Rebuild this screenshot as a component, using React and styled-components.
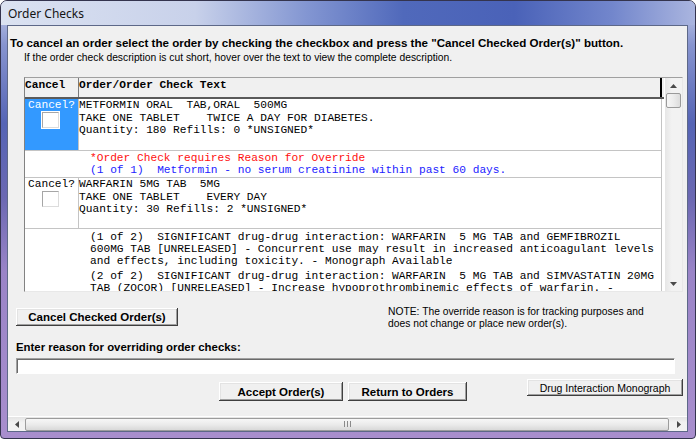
import React from 'react';
import styled, { createGlobalStyle } from 'styled-components';

const UI_FONT = '"Liberation Sans", Arial, sans-serif';
const MONO_FONT = '"Liberation Mono", "Courier New", monospace';

const GlobalStyle = createGlobalStyle`
  html, body { margin: 0; padding: 0; }
  body { width: 696px; height: 439px; overflow: hidden; background: #fff; }
`;

const Window = styled.div`
  width: 696px;
  height: 439px;
  box-sizing: border-box;
  display: flex;
  flex-direction: column;
  border: 1px solid #34344e;
  border-radius: 7px 7px 4px 4px;
  padding: 0 7px 6px 6px;
  overflow: hidden;
  background: linear-gradient(180deg, #c6cfea 0%, #8794cf 10%, #5564b5 28%, #6b68b2 45%, #9a84c7 62%, #a88ecd 100%);
`;

const TitleBar = styled.div`
  height: 24px;
  margin: 0 -7px 0 -6px;
  padding-left: 7px;
  display: flex;
  align-items: center;
  font: 12px "Noto Sans", ${UI_FONT};
  color: #141414;
  background: linear-gradient(90deg, #dbe2f1 0%, #c8d1ea 28%, #8396d2 44%, #5069bb 58%, #4a62b8 74%, #7286cc 88%, #aab5df 100%);
`;

const Client = styled.div`
  flex: 1;
  display: flex;
  flex-direction: column;
  background: #f0f0f0;
  border: 1px solid #5d6888;
  font-family: ${UI_FONT};
  color: #000;
`;

const Intro = styled.div`
  height: 51px;
  box-sizing: border-box;
  padding: 10px 0 0 2px;
`;

const Instruction = styled.div`
  font-size: 11.6px;
  font-weight: bold;
  line-height: 14px;
  white-space: nowrap;
`;

const SubLine = styled.div`
  margin: 1px 0 0 14px;
  font-size: 10.3px;
  line-height: 13px;
  white-space: nowrap;
`;

const Grid = styled.div`
  margin-left: 16px;
  width: 659px;
  height: 215px;
  box-sizing: border-box;
  display: flex;
  border-top: 1px solid #a0a0a0;
  border-left: 1px solid #828282;
  border-right: 1px solid #e8e8e8;
  border-bottom: 1px solid #e8e8e8;
  background: #fff;
`;

const GridBody = styled.div`
  flex: 1;
  display: flex;
  flex-direction: column;
  overflow: hidden;
  font-family: ${MONO_FONT};
  font-size: 11.2px;
`;

const HeaderRow = styled.div`
  height: 21px;
  flex: none;
  box-sizing: border-box;
  display: flex;
  background: #f0f0f0;
  border-bottom: 2px solid #5a5a5a;
`;

const HeaderCell = styled.div`
  box-sizing: border-box;
  width: ${p => p.w}px;
  padding-top: 1px;
  font-weight: bold;
  line-height: 13px;
  white-space: pre;
  border-right: ${p => (p.last ? '2px solid #000' : '1px solid #7a7a7a')};
`;

const Rows = styled.div`
  flex: 1;
  overflow: hidden;
`;

const Row = styled.div`
  width: 637px;
  height: ${p => p.h}px;
  box-sizing: border-box;
  display: flex;
  border-right: 1px solid #c4c4c4;
  border-bottom: 1px solid #c4c4c4;
  overflow: hidden;
`;

const CancelCell = styled.div`
  width: 54px;
  flex: none;
  box-sizing: border-box;
  border-right: 1px solid #c4c4c4;
  background: ${p => (p.selected ? '#3399ff' : '#fff')};
  color: ${p => (p.selected ? '#fff' : '#000')};
  display: flex;
  flex-direction: column;
`;

const CancelLabel = styled.div`
  padding-left: 3px;
  line-height: 12.5px;
  white-space: pre;
`;

const CheckBox = styled.div`
  width: 17px;
  height: 16px;
  margin-left: 17px;
  box-sizing: border-box;
  background: #fff;
  border: 1px solid;
  border-color: #a6a6a6 #dcdcdc #dcdcdc #a6a6a6;
  box-shadow: ${p => (p.selected ? '0 0 0 1px #ffffff' : 'none')};
`;

const TextCell = styled.div`
  flex: 1;
  padding: ${p => p.pad || '0'};
  line-height: ${p => p.lh || 12.5}px;
  white-space: pre;
  color: #000;
`;

const Line = styled.div`
  color: ${p => p.color || '#000'};
`;

const Para = styled.div`
  margin-bottom: 3px;
`;

const VScroll = styled.div`
  width: 18px;
  flex: none;
  display: flex;
  flex-direction: column;
  background: linear-gradient(90deg, #e6e6e6 0%, #f2f2f2 40%, #f2f2f2 100%);
  border-left: 1px solid #fff;
  box-sizing: border-box;
`;

const ArrowBox = styled.div`
  width: ${p => p.w || 17}px;
  height: ${p => p.h || 15}px;
  flex: none;
  display: flex;
  align-items: center;
  justify-content: center;
`;

const VThumb = styled.div`
  margin: 0 1px 0 1px;
  height: 15px;
  box-sizing: border-box;
  border: 1px solid #9a9a9a;
  border-radius: 2px;
  background: linear-gradient(90deg, #f6f6f6 0%, #ececec 50%, #dcdcdc 100%);
`;

const Track = styled.div`
  flex: 1;
`;

const ActionRow = styled.div`
  margin-top: 14px;
  height: 24px;
  padding-left: 8px;
  display: flex;
  align-items: flex-start;
`;

const WinButton = styled.button`
  box-sizing: border-box;
  width: ${p => p.w}px;
  height: ${p => p.h}px;
  margin: ${p => p.m || '0'};
  padding: 0;
  flex: none;
  border: none;
  background: #f0f0f0;
  font-family: ${UI_FONT};
  font-size: ${p => (p.plain ? '10.5px' : '11.5px')};
  font-weight: ${p => (p.plain ? 'normal' : 'bold')};
  color: #000;
  box-shadow: inset -1px -1px #3f3f3f, inset 1px 1px #ffffff, inset -2px -2px #a0a0a0, inset 2px 2px #e3e3e3;
`;

const Note = styled.div`
  margin-left: 210px;
  font-size: 10.3px;
  line-height: 12px;
`;

const FieldLabel = styled.div`
  margin: 10px 0 0 8px;
  font-size: 11.4px;
  font-weight: bold;
  line-height: 14px;
`;

const ReasonInput = styled.div`
  margin: 4px 0 0 8px;
  width: 659px;
  height: 16px;
  box-sizing: border-box;
  background: #fff;
  border: 1px solid;
  border-color: #a0a0a0 #ffffff #ffffff #a0a0a0;
  box-shadow: inset 1px 1px #6a6a6a;
`;

const ButtonRow = styled.div`
  margin-top: 5px;
  display: flex;
  align-items: flex-start;
`;

const HScroll = styled.div`
  margin-top: auto;
  height: 14px;
  display: flex;
  align-items: center;
  background: linear-gradient(180deg, #e4e4e4 0%, #f2f2f2 40%, #f2f2f2 100%);
  border-top: 1px solid #fff;
`;

const HThumb = styled.div`
  flex: 1;
  height: 13px;
  margin-right: 1px;
  box-sizing: border-box;
  border: 1px solid #9c9c9c;
  border-radius: 2px;
  background: linear-gradient(180deg, #f7f7f7 0%, #ebebeb 50%, #d9d9d9 100%);
  display: flex;
  align-items: center;
  justify-content: center;
`;

const Arrow = ({ dir }) => {
  const pts = {
    up: '0,4 3.5,0 7,4',
    down: '0,0 7,0 3.5,4',
    left: '4,0 4,7 0,3.5',
    right: '0,0 0,7 4,3.5',
  }[dir];
  const vertical = dir === 'up' || dir === 'down';
  return (
    <svg width={vertical ? 7 : 4} height={vertical ? 4 : 7} viewBox={vertical ? '0 0 7 4' : '0 0 4 7'}>
      <polygon points={pts} fill="#4a4a4a" />
    </svg>
  );
};

const Grip = () => (
  <svg width="7" height="6" viewBox="0 0 7 6">
    <path d="M0.5 0v6M3.5 0v6M6.5 0v6" stroke="#8a8a8a" strokeWidth="1" />
  </svg>
);

const orders = [
  {
    id: 'metformin',
    selected: true,
    h: 52,
    lines: [
      'METFORMIN ORAL  TAB,ORAL  500MG',
      'TAKE ONE TABLET    TWICE A DAY FOR DIABETES.',
      'Quantity: 180 Refills: 0 *UNSIGNED*',
    ],
    checkH: 27,
    checks: [
      [
        { text: '*Order Check requires Reason for Override', color: '#ff1010' },
        { text: '(1 of 1)  Metformin - no serum creatinine within past 60 days.', color: '#2323ff' },
      ],
    ],
  },
  {
    id: 'warfarin',
    selected: false,
    h: 51,
    lines: [
      'WARFARIN 5MG TAB  5MG',
      'TAKE ONE TABLET    EVERY DAY',
      'Quantity: 30 Refills: 2 *UNSIGNED*',
    ],
    checkH: 80,
    checks: [
      [
        { text: '(1 of 2)  SIGNIFICANT drug-drug interaction: WARFARIN  5 MG TAB and GEMFIBROZIL' },
        { text: '600MG TAB [UNRELEASED] - Concurrent use may result in increased anticoagulant levels' },
        { text: 'and effects, including toxicity. - Monograph Available' },
      ],
      [
        { text: '(2 of 2)  SIGNIFICANT drug-drug interaction: WARFARIN  5 MG TAB and SIMVASTATIN 20MG' },
        { text: 'TAB (ZOCOR) [UNRELEASED] - Increase hypoprothrombinemic effects of warfarin. -' },
        { text: 'Monograph Available' },
      ],
    ],
  },
];

const OrderRows = ({ order }) => (
  <>
    <Row h={order.h}>
      <CancelCell selected={order.selected}>
        <CancelLabel>Cancel?</CancelLabel>
        <CheckBox selected={order.selected} />
      </CancelCell>
      <TextCell>
        {order.lines.map(l => <Line key={l}>{l}</Line>)}
      </TextCell>
    </Row>
    <Row h={order.checkH}>
      {order.checks.length === 1 ? (
        <TextCell pad="0.5px 0 0 65px">
          {order.checks[0].map(c => <Line key={c.text} color={c.color}>{c.text}</Line>)}
        </TextCell>
      ) : (
        <TextCell pad="2px 0 0 65px" lh={12}>
          {order.checks.map((p, i) => (
            <Para key={i}>
              {p.map(c => <Line key={c.text} color={c.color}>{c.text}</Line>)}
            </Para>
          ))}
        </TextCell>
      )}
    </Row>
  </>
);

export default function App() {
  return (
    <>
      <GlobalStyle />
      <Window>
        <TitleBar>Order Checks</TitleBar>
        <Client>
          <Intro>
            <Instruction>
              To cancel an order select the order by checking the checkbox and press the "Cancel Checked Order(s)" button.
            </Instruction>
            <SubLine>
              If the order check description is cut short, hover over the text to view the complete description.
            </SubLine>
          </Intro>

          <Grid>
            <GridBody>
              <HeaderRow>
                <HeaderCell w={54}>Cancel</HeaderCell>
                <HeaderCell w={583} last>Order/Order Check Text</HeaderCell>
              </HeaderRow>
              <Rows>
                {orders.map(o => <OrderRows key={o.id} order={o} />)}
              </Rows>
            </GridBody>
            <VScroll>
              <ArrowBox><Arrow dir="up" /></ArrowBox>
              <VThumb />
              <Track />
              <ArrowBox><Arrow dir="down" /></ArrowBox>
            </VScroll>
          </Grid>

          <ActionRow>
            <WinButton w={162} h={18} m="2px 0 0 0">Cancel Checked Order(s)</WinButton>
            <Note>
              NOTE: The override reason is for tracking purposes and
              <br />
              does not change or place new order(s).
            </Note>
          </ActionRow>

          <FieldLabel>Enter reason for overriding order checks:</FieldLabel>
          <ReasonInput />

          <ButtonRow>
            <WinButton w={124} h={19} m="3px 0 0 211px">Accept Order(s)</WinButton>
            <WinButton w={119} h={19} m="3px 0 0 5px">Return to Orders</WinButton>
            <WinButton w={156} h={17} m="0 0 0 60px" plain>Drug Interaction Monograph</WinButton>
          </ButtonRow>

          <HScroll>
            <ArrowBox w={17} h={14}><Arrow dir="left" /></ArrowBox>
            <HThumb><Grip /></HThumb>
            <ArrowBox w={17} h={14}><Arrow dir="right" /></ArrowBox>
          </HScroll>
        </Client>
      </Window>
    </>
  );
}
